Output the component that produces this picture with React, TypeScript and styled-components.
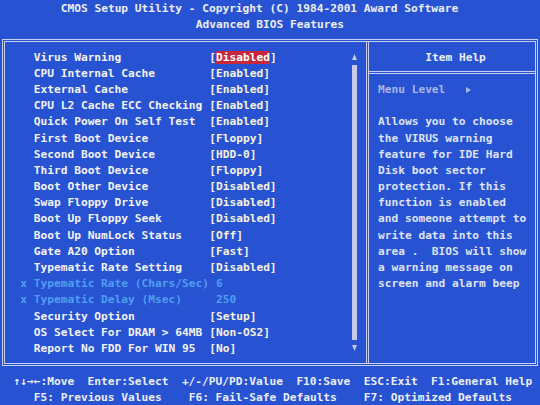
import React from "react";
import styled, { createGlobalStyle } from "styled-components";

const CW = 6.75;
const RH = 16.2;
const BG = "#2752d2";
const LINE = "#c9d0f0";

const Global = createGlobalStyle`
  html, body { margin: 0; padding: 0; background: ${BG}; }
  body { width: 540px; height: 405px; overflow: hidden; }
`;

const Screen = styled.div`
  width: 540px;
  height: 405px;
  background: ${BG};
  display: flex;
  flex-direction: column;
  font-family: "DejaVu Sans Mono", "Liberation Mono", monospace;
  font-weight: bold;
  font-size: 11.2px;
  color: #eceef4;
`;

const Line = styled.div<{ $indent?: number; $tone?: string }>`
  height: ${RH}px;
  box-sizing: border-box;
  padding-top: 2px;
  line-height: 14.2px;
  white-space: pre;
  padding-left: ${(p) => p.$indent ?? 0}px;
  color: ${(p) => p.$tone ?? "inherit"};
`;

const Frame = styled.div`
  margin: 6.6px 2px 0 2px;
  height: 327px;
  box-sizing: border-box;
  border: 3px double ${LINE};
  display: grid;
  grid-template-columns: 361.4px 3px 1fr;
`;

const LeftPanel = styled.div`
  padding-top: 6.6px;
  display: flex;
  align-items: flex-start;
`;

const Rows = styled.div`
  width: 346px;
  display: flex;
  flex-direction: column;
`;

const Row = styled.div<{ $off?: boolean }>`
  height: ${RH}px;
  box-sizing: border-box;
  padding: 2px 0 0 15.25px;
  line-height: 14.2px;
  white-space: pre;
  display: grid;
  grid-template-columns: 13.5px 175.5px 1fr;
  color: ${(p) => (p.$off ? "#4f9ff0" : "#f3f3f3")};
`;

const Mark = styled.span``;
const Label = styled.span``;
const Value = styled.span<{ $off?: boolean }>`
  color: ${(p) => (p.$off ? "#4f9ff0" : "#f7f2de")};
`;

const Highlight = styled.span`
  background: #c9283c;
  color: #ffffff;
`;

const ScrollBar = styled.div`
  width: ${CW}px;
  display: flex;
  flex-direction: column;
  align-items: center;
`;

const ArrowCell = styled.div`
  height: ${RH}px;
  display: flex;
  align-items: center;
  justify-content: center;
`;

const Track = styled.div`
  width: 4.6px;
  height: ${RH * 17}px;
  background: #c6cae6;
`;

const Divider = styled.div`
  border-left: 3px double ${LINE};
`;

const HelpPanel = styled.div`
  display: flex;
  flex-direction: column;
`;

const HelpHead = styled.div`
  height: 32.4px;
  box-sizing: border-box;
  padding-top: 6.6px;
  border-bottom: 3px double ${LINE};
`;

const HelpBody = styled.div`
  padding-top: 6.6px;
  display: flex;
  flex-direction: column;
  color: #dfe2f2;
`;

const MenuLine = styled.div`
  height: ${RH}px;
  box-sizing: border-box;
  padding: 2px 0 0 ${56 * CW - 369.4}px;
  line-height: 14.2px;
  white-space: pre;
  display: flex;
  align-items: center;
  color: #a9b6ea;
`;

const PointerBox = styled.span`
  width: ${CW}px;
  display: inline-flex;
  justify-content: center;
  margin-left: ${3 * CW}px;
`;

const Footer = styled.div`
  margin-top: 6.6px;
  display: flex;
  flex-direction: column;
`;

type Item = { label: string; value: string; off?: boolean; selected?: boolean };

const items: Item[] = [
  { label: "Virus Warning", value: "Disabled", selected: true },
  { label: "CPU Internal Cache", value: "[Enabled]" },
  { label: "External Cache", value: "[Enabled]" },
  { label: "CPU L2 Cache ECC Checking", value: "[Enabled]" },
  { label: "Quick Power On Self Test", value: "[Enabled]" },
  { label: "First Boot Device", value: "[Floppy]" },
  { label: "Second Boot Device", value: "[HDD-0]" },
  { label: "Third Boot Device", value: "[Floppy]" },
  { label: "Boot Other Device", value: "[Disabled]" },
  { label: "Swap Floppy Drive", value: "[Disabled]" },
  { label: "Boot Up Floppy Seek", value: "[Disabled]" },
  { label: "Boot Up NumLock Status", value: "[Off]" },
  { label: "Gate A20 Option", value: "[Fast]" },
  { label: "Typematic Rate Setting", value: "[Disabled]" },
  { label: "Typematic Rate (Chars/Sec)", value: " 6", off: true },
  { label: "Typematic Delay (Msec)", value: " 250", off: true },
  { label: "Security Option", value: "[Setup]" },
  { label: "OS Select For DRAM > 64MB", value: "[Non-OS2]" },
  { label: "Report No FDD For WIN 95", value: "[No]" },
];

const help = [
  "Allows you to choose",
  "the VIRUS warning",
  "feature for IDE Hard",
  "Disk boot sector",
  "protection. If this",
  "function is enabled",
  "and someone attempt to",
  "write data into this",
  "area .  BIOS will show",
  "a warning message on",
  "screen and alarm beep",
];

const HELP_X = 369.4;

const Up = () => (
  <svg width="5" height="6" viewBox="0 0 5 6">
    <polygon points="2.5,0 5,6 0,6" fill="#c6cae6" />
  </svg>
);
const Down = () => (
  <svg width="5" height="6" viewBox="0 0 5 6">
    <polygon points="0,0 5,0 2.5,6" fill="#c6cae6" />
  </svg>
);
const Right = () => (
  <svg width="5" height="6" viewBox="0 0 5 6">
    <polygon points="0,0 5,3 0,6" fill="#a9b6ea" />
  </svg>
);

export default function App() {
  return (
    <Screen>
      <Global />
      <Line $indent={9 * CW}>CMOS Setup Utility - Copyright (C) 1984-2001 Award Software</Line>
      <Line $indent={29 * CW}>Advanced BIOS Features</Line>
      <Frame>
        <LeftPanel>
          <Rows>
            {items.map((it) => (
              <Row key={it.label} $off={it.off}>
                <Mark>{it.off ? "x" : ""}</Mark>
                <Label>{it.label}</Label>
                <Value $off={it.off}>
                  {it.selected ? (
                    <>
                      [<Highlight>{it.value}</Highlight>]
                    </>
                  ) : (
                    it.value
                  )}
                </Value>
              </Row>
            ))}
          </Rows>
          <ScrollBar>
            <ArrowCell>
              <Up />
            </ArrowCell>
            <Track />
            <ArrowCell>
              <Down />
            </ArrowCell>
          </ScrollBar>
        </LeftPanel>
        <Divider />
        <HelpPanel>
          <HelpHead>
            <Line $indent={63 * CW - HELP_X}>Item Help</Line>
          </HelpHead>
          <HelpBody>
            <MenuLine>
              Menu Level
              <PointerBox>
                <Right />
              </PointerBox>
            </MenuLine>
            <Line />
            {help.map((h) => (
              <Line key={h} $indent={56 * CW - HELP_X}>
                {h}
              </Line>
            ))}
          </HelpBody>
        </HelpPanel>
      </Frame>
      <Footer>
        <Line $indent={2 * CW}>↑↓→←:Move  Enter:Select  +/-/PU/PD:Value  F10:Save  ESC:Exit  F1:General Help</Line>
        <Line $indent={5 * CW}>F5: Previous Values    F6: Fail-Safe Defaults    F7: Optimized Defaults</Line>
      </Footer>
    </Screen>
  );
}
